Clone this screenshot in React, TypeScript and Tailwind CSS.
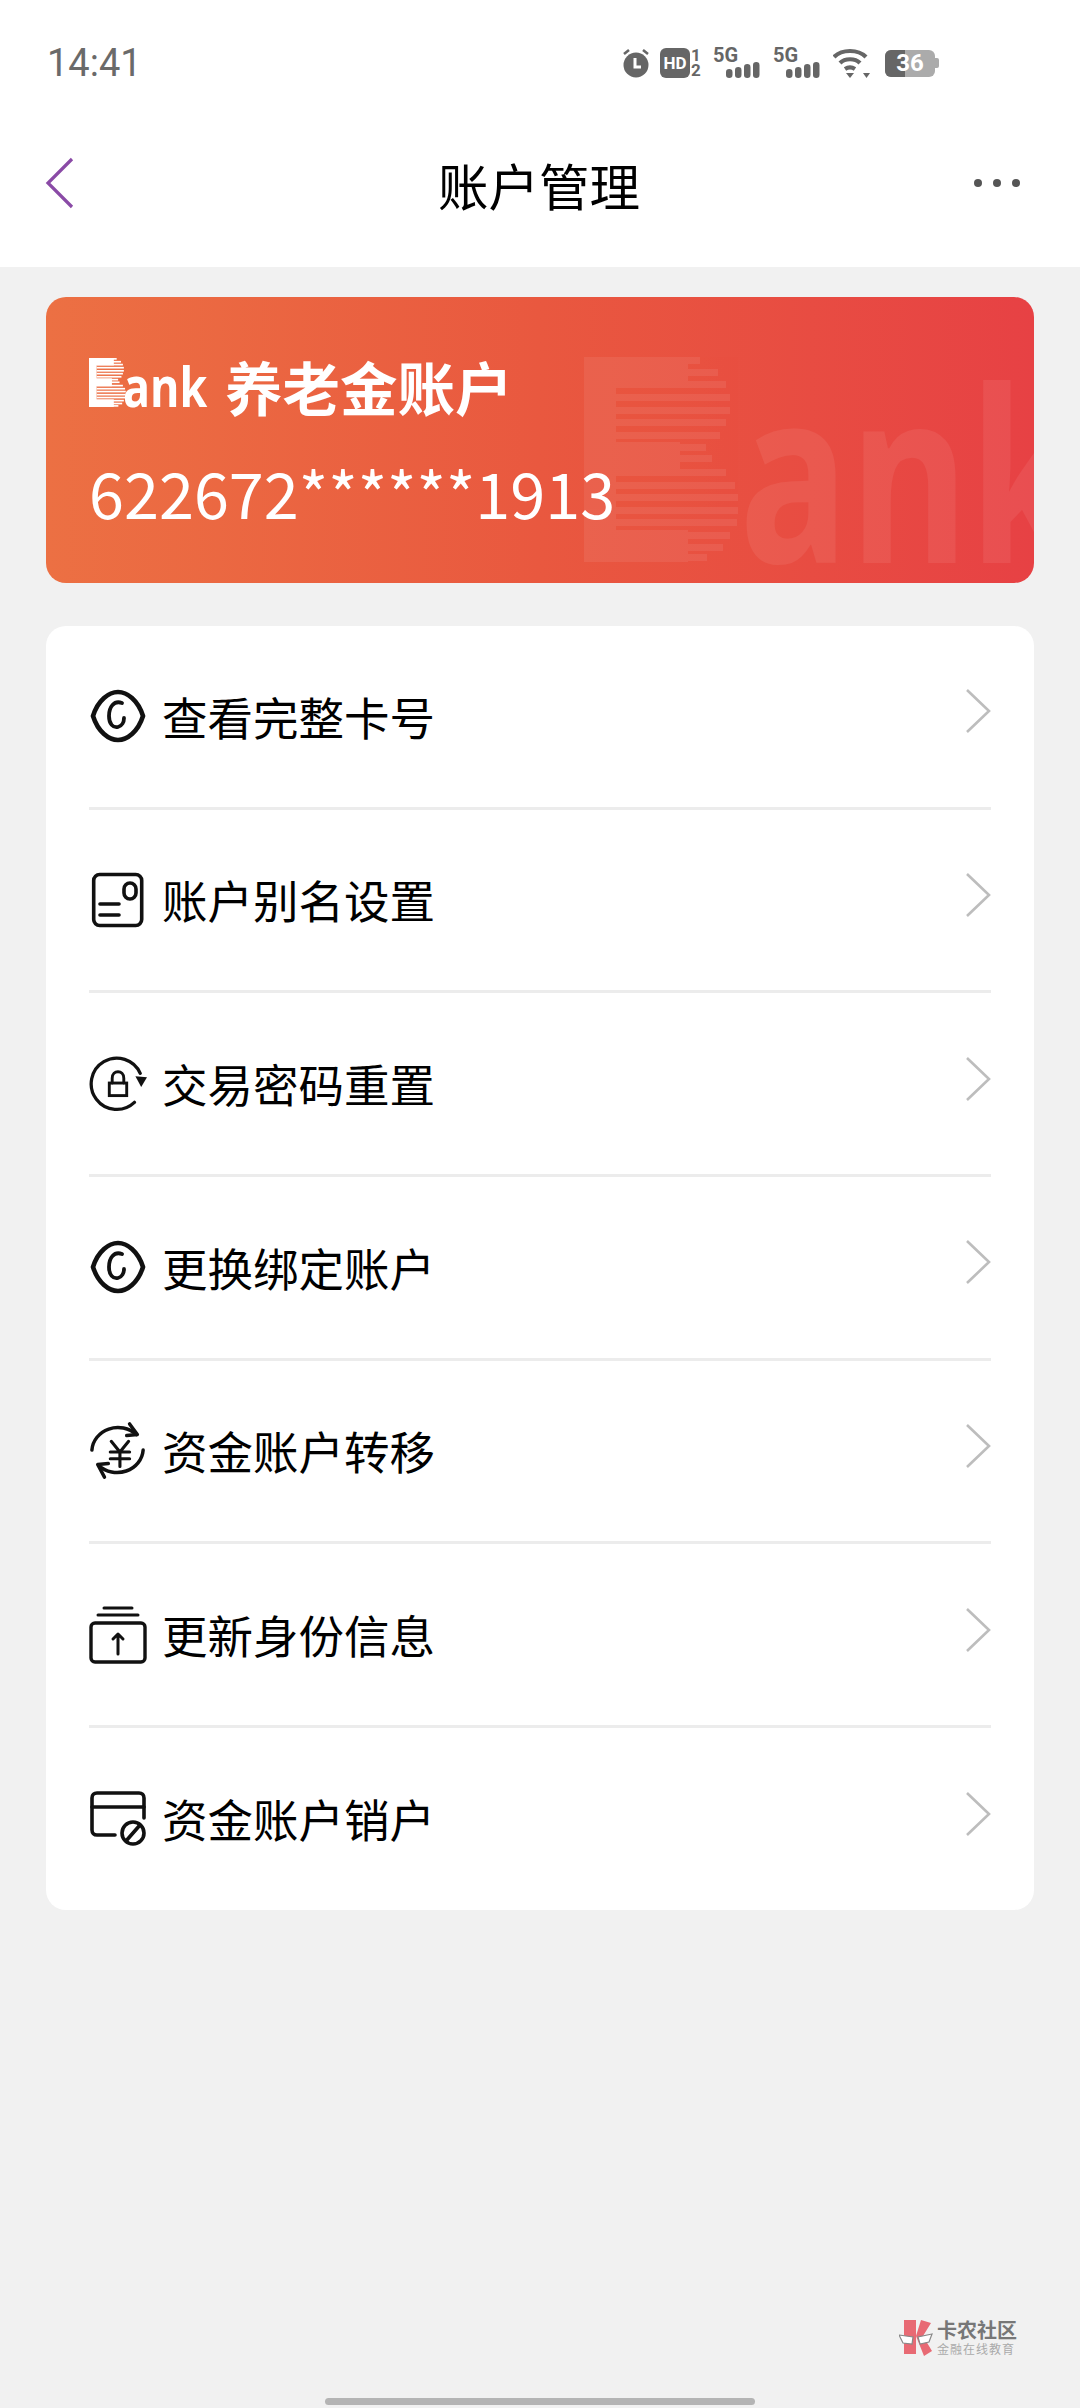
const cjk = "font-['Noto_Sans_CJK_SC','Noto_Sans',sans-serif]";

const EyeIcon = () => (
  <svg width="58" height="56" viewBox="0 0 58 56" fill="none" stroke="#111" strokeWidth="4.6" strokeLinecap="round">
    <path d="M4 28C9 12 20 4 29 4s20 8 25 24c-5 16-16 24-25 24S9 44 4 28Z" />
    <path d="M33 15c-8-3-13 4-13 13 0 8 4 12 9 11 4-1 6-5 6-9" strokeWidth="3.8" />
  </svg>
);

const CardIcon = () => (
  <svg width="56" height="58" viewBox="0 0 56 58" fill="none" stroke="#111" strokeLinecap="round">
    <rect x="3.7" y="3.5" width="48" height="51" rx="6" strokeWidth="3.6" />
    <path d="M10 33h19M10 44h19" strokeWidth="3.6" />
    <rect x="34" y="12" width="12" height="16" rx="6" strokeWidth="3.6" />
  </svg>
);

const LockIcon = () => (
  <svg width="60" height="60" viewBox="6 6 60 60" fill="none" stroke="#111" strokeLinecap="round">
    <path d="M53 55A26.5 26.5 0 1 1 59 25" strokeWidth="3.4" />
    <path d="M54 28l12 1-6 10Z" fill="#111" stroke="none" />
    <rect x="27" y="35" width="18" height="13" strokeWidth="3" />
    <path d="M30 35v-5c0-9 12-9 12 0v5" strokeWidth="3" />
  </svg>
);

const YuanIcon = () => (
  <svg width="60" height="60" viewBox="8 14 60 60" fill="none" stroke="#111" strokeLinecap="round" strokeLinejoin="round">
    <path d="M11 43A27 25 0 0 1 57 27" strokeWidth="3.6" />
    <path d="M50 16l8 11-11 1" strokeWidth="3.6" />
    <path d="M64 43A27 25 0 0 1 18 59" strokeWidth="3.6" />
    <path d="M24 71l-7-13 11-1" strokeWidth="3.6" />
    <path d="M31 34l9 11 9-11M30 45h20M30 52h20M40 45v15" strokeWidth="3.2" />
  </svg>
);

const UploadIcon = () => (
  <svg width="58" height="58" viewBox="0 0 58 58" fill="none" stroke="#111" strokeLinecap="round" strokeLinejoin="round">
    <path d="M15 2h28M9 9h40" strokeWidth="3" />
    <rect x="2" y="17" width="54" height="39" rx="4" strokeWidth="3.4" />
    <path d="M29 48V28M24 33l5-5 5 5" strokeWidth="3" />
  </svg>
);

const CardBanIcon = () => (
  <svg width="58" height="56" viewBox="0 0 58 56" fill="none" stroke="#111" strokeLinecap="round">
    <path d="M26 44H8c-3 0-5-2-5-5V7c0-3 2-5 5-5h42c3 0 5 2 5 5v20" strokeWidth="3.6" />
    <path d="M3 16h52" strokeWidth="3.6" />
    <circle cx="44" cy="42" r="11" strokeWidth="3.6" />
    <path d="M37 50l14-16" strokeWidth="3.6" />
  </svg>
);

const Chevron = () => (
  <svg width="26" height="46" viewBox="0 0 26 46" fill="none" stroke="#bdbdbd" strokeWidth="2.6">
    <path d="M2 2l22 21L2 44" />
  </svg>
);

// [y, right edge] of each stripe of the B mark, in a 155x205 box
const stripes = [
  [0, 116], [12, 134], [24, 142], [37, 146], [50, 146], [62, 142], [75, 136], [87, 122], [98, 128],
  [112, 142], [125, 151], [137, 154], [150, 154], [162, 153], [175, 146], [187, 139], [197, 123],
];

const BMark = ({ className, opacity }: { className: string; opacity: number }) => (
  <svg className={className} viewBox="0 0 155 205" fill="#fff">
    <g opacity={opacity}>
      <rect x="0" y="0" width="32" height="205" />
      <rect x="0" y="0" width="104" height="31" />
      <rect x="0" y="85" width="96" height="33" />
      <rect x="0" y="173" width="104" height="32" />
      {stripes.map(([y, w]) => (
        <rect key={y} x="32" y={y} width={w - 32} height="7" />
      ))}
    </g>
  </svg>
);

const Signal = () => (
  <div className="flex flex-col w-[47px] h-[30px]">
    <span className="font-['Roboto',sans-serif] text-[20px] leading-[15px] font-bold text-[#666]">5G</span>
    <svg width="34" height="16" viewBox="0 0 34 16" fill="#666" className="ml-[13px] -mt-[1px]">
      <rect x="0" y="7" width="6.5" height="9" rx="3.2" />
      <rect x="9" y="5" width="6.5" height="11" rx="3.2" />
      <rect x="18" y="2" width="6.5" height="14" rx="3.2" />
      <rect x="27" y="0" width="6.5" height="16" rx="3.2" />
    </svg>
  </div>
);

const StatusBar = () => (
  <div className="h-[126px] pl-[47px] pr-[141px] pt-[43px] flex justify-between items-start">
    <span className="font-['Roboto',sans-serif] text-[38px] leading-[40px] text-[#6a6a6a]">14:41</span>
    <div className="flex items-center mt-[5px] h-[30px]">
      <svg width="28" height="30" viewBox="0 0 28 30">
        <circle cx="14" cy="17" r="12.5" fill="#666" />
        <path d="M13 10v9h6" stroke="#fff" strokeWidth="3" fill="none" />
        <path d="M2 6l5-4M26 6l-5-4" stroke="#666" strokeWidth="2.6" />
      </svg>
      <div className="flex items-center ml-[10px]">
        <div className="w-[30px] h-[30px] rounded-[6px] bg-[#666] flex items-center justify-center font-['Roboto',sans-serif] font-bold text-[17px] leading-none text-white">HD</div>
        <div className="flex flex-col w-[12px] items-center font-['Roboto',sans-serif] font-bold text-[#666] text-[17px] leading-[15px]">
          <span>1</span>
          <span>2</span>
        </div>
      </div>
      <div className="ml-[11px]">
        <Signal />
      </div>
      <div className="ml-[13px]">
        <Signal />
      </div>
      <svg width="37" height="30" viewBox="0 0 37 30" fill="none" stroke="#666" strokeWidth="4.2" className="ml-[13px]">
        <path d="M1 9c8-8 24-8 32 0M7 15c5-5 15-5 20 0M12 21c3-2 7-2 10 0" />
        <path d="M13 25h8l-4 5Z" fill="#666" stroke="none" />
        <path d="M30 25h7l-3.5 5Z" fill="#666" stroke="none" />
      </svg>
      <div className="flex items-center ml-[15px]">
        <div className="relative w-[50px] h-[27px] rounded-[6px] bg-[#ababab] overflow-hidden flex items-center justify-center font-['Roboto',sans-serif] font-bold text-[24px] leading-none text-white">
          <div className="absolute left-0 top-0 bottom-0 w-[20px] bg-[#666]" />
          <span className="relative">36</span>
        </div>
        <div className="w-[4px] h-[10px] rounded-r-[2px] bg-[#ababab]" />
      </div>
    </div>
  </div>
);

const rows = [
  { label: '查看完整卡号', icon: <EyeIcon /> },
  { label: '账户别名设置', icon: <CardIcon /> },
  { label: '交易密码重置', icon: <LockIcon /> },
  { label: '更换绑定账户', icon: <EyeIcon /> },
  { label: '资金账户转移', icon: <YuanIcon /> },
  { label: '更新身份信息', icon: <UploadIcon /> },
  { label: '资金账户销户', icon: <CardBanIcon /> },
];

export default function App() {
  return (
    <div className={`${cjk} w-[1080px] h-[2408px] bg-[#f1f1f1] flex flex-col overflow-hidden`}>
      <header className="bg-white h-[267px] shrink-0">
        <StatusBar />
        <div className="relative flex items-center justify-center h-[116px] pr-[2px]">
          <svg width="30" height="52" viewBox="0 0 30 52" fill="none" stroke="#8a4aa6" strokeWidth="3.2" className="absolute left-[44px] top-[31px]">
            <path d="M28 2L4 26l24 24" />
          </svg>
          <h1 className="text-[50.5px] leading-none font-normal text-black">账户管理</h1>
          <div className="absolute right-[60px] top-[53px] flex gap-[11px]">
            <span className="w-[8px] h-[8px] rounded-full bg-[#555]" />
            <span className="w-[8px] h-[8px] rounded-full bg-[#555]" />
            <span className="w-[8px] h-[8px] rounded-full bg-[#555]" />
          </div>
        </div>
      </header>

      <section className="relative mx-[46px] mt-[30px] h-[286px] rounded-[20px] overflow-hidden bg-gradient-to-r from-[#ec7043] via-[#e9583f] to-[#e74144] text-white pl-[43px] shrink-0">
        <div className="absolute left-[538px] top-[60px] flex items-start">
          <BMark className="w-[155px] h-[205px] shrink-0" opacity={0.07} />
          <span className="font-['Open_Sans',sans-serif] font-bold text-[240px] leading-[205px] mt-[10px] text-white/[0.07] origin-left scale-x-[0.76]">ank</span>
        </div>
        <div className="relative flex items-start pt-[61px]">
          <div className="w-[136px] flex items-start shrink-0">
            <BMark className="w-[37px] h-[49px] shrink-0" opacity={1} />
            <span className="font-['Open_Sans',sans-serif] font-bold text-[56px] leading-[49px] mt-[3px] -ml-[3px] origin-left scale-x-[0.8]">ank</span>
          </div>
          <span className="text-[57.5px] leading-[57px] font-bold">养老金账户</span>
        </div>
        <div className="relative mt-[41px] text-[63px] leading-[72px]">622672******1913</div>
      </section>

      <section className="mx-[46px] mt-[43px] bg-white rounded-[20px] px-[43px] shrink-0">
        {rows.map((row, i) => (
          <div key={i} className={`flex items-center ${i < rows.length - 1 ? 'h-[183.7px] border-b-[3px] border-[#ececec]' : 'h-[182px]'}`}>
            <div className="w-[58px] flex justify-center mr-[15px]">{row.icon}</div>
            <span className="flex-1 text-[45.5px] leading-none text-black">{row.label}</span>
            <div className="-mt-[10px]">
              <Chevron />
            </div>
          </div>
        ))}
      </section>

      <footer className="mt-auto pb-[3px] flex flex-col">
        <div className="self-end mr-[63px] mb-[42px] flex items-center gap-[4px]">
          <svg width="34" height="36" viewBox="0 0 34 36">
            <path d="M5 0h12v34H5zM17 16L22 0l10 3-8 13 9 15-8 5z" fill="#e86a74" />
            <path d="M0 15l14 2-1 7-9-1ZM33 14l-14 3 2 7 9-2Z" fill="#fff" stroke="#888" strokeWidth="1.2" />
          </svg>
          <div className="flex flex-col">
            <span className="text-[20px] leading-[22px] font-bold text-[#777]">卡农社区</span>
            <span className="text-[12px] leading-[15px] tracking-[1px] text-[#aaa]">金融在线教育</span>
          </div>
        </div>
        <div className="self-center w-[430px] h-[7px] rounded-full bg-[#b4b4b4]" />
      </footer>
    </div>
  );
}
